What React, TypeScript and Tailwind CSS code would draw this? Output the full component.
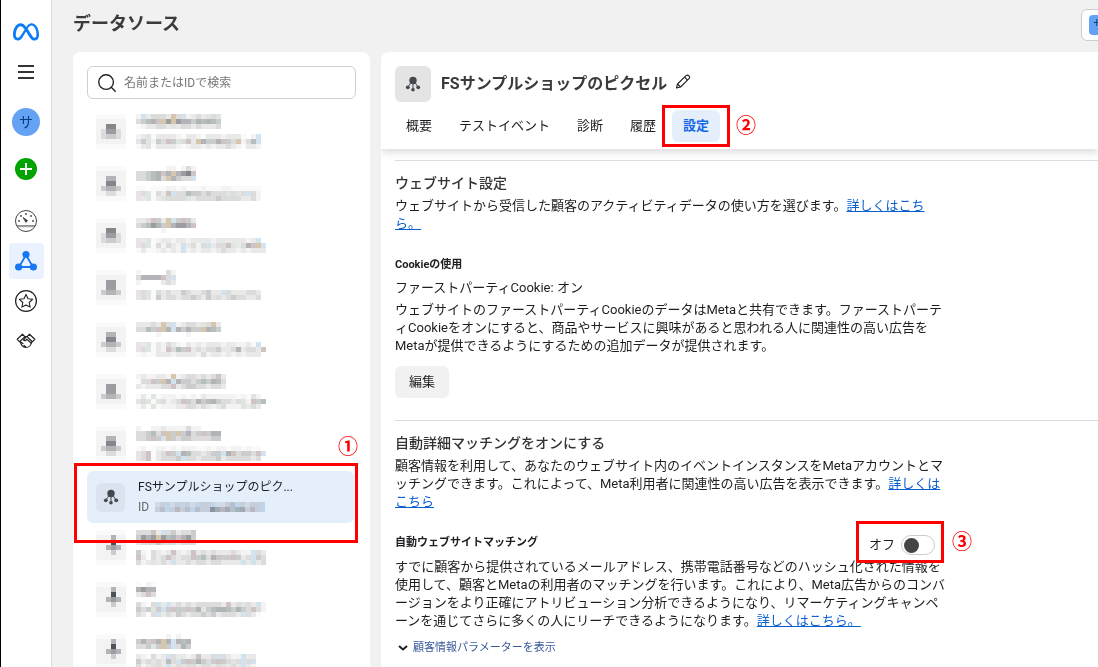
import { useState } from "react";
import type { ReactNode } from "react";
import { FaMeta } from "react-icons/fa6";
import { Search } from "lucide-react";

type Source = {
  name: string[];
  id: string[];
  icon: string[];
};

// one character per mosaic cell
const SHADES: Record<string, string> = {
  "1": "#fafafa",
  "2": "#f3f3f3",
  "3": "#e9e9ea",
  "4": "#dcdcdd",
  "5": "#cbcccd",
  "6": "#b3b4b7",
  "7": "#9b9da1",
  "8": "#84868c",
  "9": "#4d525a",
  o: "#d6c6ac",
  b: "#d3e3ee",
  g: "#b5c0bd",
  p: "#ebe1ea",
  m: "#cfc3c3",
  n: "#dfe6df",
};

const iconA = ["111111", "222222", "228822", "247742", "245542", "222222", "111111"];
const iconB = ["111111", "222222", "226622", "228822", "256652", "224422", "111111"];
const iconC = ["111111", "222222", "227722", "227722", "256652", "222222", "111111"];
const iconD = ["111111", "222622", "222922", "226762", "222522", "222222", "111111"];

const sources: Source[] = [
  { name: ["2b34443o4b2343n4n", "45g6mo7o76656g6g5", "1233443n344343334"], id: ["23n1333321332133323331.2b", "p5n254m5n4m3o6556m54o24gb", "13n1333321233232334321332"], icon: iconA },
  { name: ["......22.242", "445g6m6o678m", "445g64o6544b"], id: ["11.1112212111211122111111", "p4n143mb44g5545444n4n4b42", "p3n13n4444n34444544443342"], icon: iconB },
  { name: ["334m53ob5m53", "45g765o6776m", ".....2......"], id: ["p3n123323323333233333323b", "p4n142432b3424b344mn346mob", "131123232b2323323433232333"], icon: iconA },
  { name: ["2.....42", "46666m4b", "2....343"], id: ["p4n14343354334533b4333443", "p4n153443445435n434544334"], icon: iconC },
  { name: ["33343o4b23443n4o3", "44g5mo6b65655o6g5", "....2.....2......"], id: ["p3n132432132323332332231b", "p4n132m4g5m34344533463443m", "1211333233332423323232333"], icon: iconB },
  { name: ["2322332o23443434m3", "144m5o6b65545g56g4", "3233344m3455443443"], id: ["131n1222121213222222121n2", "p4n1n4234m5465g654434n2m5g", "131n12223344343234222n343"], icon: iconC },
  { name: ["2..2232222422", "445g4mo5o5645m566", "445m5bo5455444455"], id: ["12.1221212221121221221211", "p4m134m5b6g443455b6m4554mb", "p4m134445b443444534444434"], icon: iconB },
  { name: [], id: ["34b34b43b44b3345b4344b", "45b4m45b54476m65g64m4b"], icon: [] },
  { name: ["444m3b453445", "5767o7g6m675", "3444m44b3444"], id: ["5214323m323m34343334322b43", "m31434m4344m5g46m55m534b54", "423n343b3343443443333b3b34"], icon: iconD },
  { name: ["1.21", "6766", "34m4"], id: ["4214b3b34343444443m34n43b2", "545n5b5m55m56n5g66g5654m42", "4314b3435434454534443b431"], icon: iconD },
  { name: ["......2.2..", "565m6o6b6g6", "445n5o5b465"], id: ["321423b43323m334b4322b33", "534n43g4b5m56545m54n4b4b", "423n43b34n4434434n343b32"], icon: iconD },
];

function Mosaic({ rows, className = "" }: { rows: string[]; className?: string }) {
  const cols = Math.max(...rows.map((r) => r.length));
  return (
    <svg
      width={cols * 5}
      height={rows.length * 5}
      shapeRendering="crispEdges"
      className={"block shrink-0 " + className}
      aria-hidden="true"
    >
      {rows.map((row, y) =>
        row.split("").map((c, x) =>
          SHADES[c] ? (
            <rect key={`${x}-${y}`} x={x * 5} y={y * 5} width="5" height="5" fill={SHADES[c]} />
          ) : null
        )
      )}
    </svg>
  );
}

function PixelIcon() {
  return (
    <svg width="16" height="16" viewBox="0 0 16 16" fill="#444950" stroke="#444950" aria-hidden="true">
      <circle cx="8" cy="4.500" r="3.700" stroke="none" />
      <path d="M8 7v6M6 6.500 3 11M10 6.500l3 4.500" strokeWidth="1" fill="none" />
      <circle cx="2.800" cy="11.300" r="1.900" stroke="none" />
      <circle cx="8" cy="13.800" r="1.800" stroke="none" />
      <circle cx="13.200" cy="11.300" r="1.900" stroke="none" />
    </svg>
  );
}

function GaugeIcon() {
  return (
    <svg width="24" height="24" viewBox="0 0 24 24" fill="none" stroke="#444" aria-hidden="true">
      <circle cx="12" cy="12" r="10.500" strokeWidth="1" />
      <path d="M2.500 16.500h19M3.500 17.700h17" strokeWidth=".6" />
      <path d="m9 8.500 4.500 3-1.500 2z" fill="#333" strokeWidth=".8" />
      <g fill="#444" stroke="none">
        <circle cx="5" cy="12" r=".9" />
        <circle cx="7" cy="7" r=".9" />
        <circle cx="12" cy="5" r=".9" />
        <circle cx="17" cy="7" r=".9" />
        <circle cx="19" cy="12" r=".9" />
      </g>
    </svg>
  );
}

function TriangleIcon() {
  return (
    <svg width="24" height="24" viewBox="0 0 24 24" fill="#1877f2" stroke="#1877f2" aria-hidden="true">
      <path d="M12 6 5 18h14z" fill="none" strokeWidth="1.800" />
      <circle cx="12" cy="5.500" r="3.600" stroke="none" />
      <circle cx="4.600" cy="18" r="3.600" stroke="none" />
      <circle cx="19.400" cy="18" r="3.600" stroke="none" />
    </svg>
  );
}

function StarIcon() {
  return (
    <svg width="24" height="24" viewBox="0 0 24 24" fill="none" stroke="#222" strokeLinejoin="round" aria-hidden="true">
      <circle cx="12" cy="12" r="10.400" strokeWidth="1.200" />
      <path d="m12 5.500 2 4.200 4.600.6-3.400 3.200.9 4.600L12 15.900l-4.100 2.200.9-4.600-3.400-3.200 4.600-.6z" strokeWidth="1.100" />
    </svg>
  );
}

function HandshakeIcon() {
  return (
    <svg width="20" height="16" viewBox="0 0 20 16" fill="none" stroke="#222" strokeWidth="1.200" strokeLinejoin="round" strokeLinecap="round" aria-hidden="true">
      <path d="M6.500 1.200 1.200 6.300l2.400 2.500 5.300-5.200z" />
      <path d="m13.500 1.200 5.300 5.100-2.400 2.500-5.300-5.200z" />
      <path d="M8.500 3.500h3M10 4 7.500 7c1.200 1.200 2.500.6 3.500-.8l4.300 4" />
      <path d="M4.500 8.500c0 3 2.300 6 5.200 6 3.300 0 5.600-2.500 5.800-5.500M8 12.500l2 1.800M5.500 9.500l1.500 1" />
    </svg>
  );
}

function PencilIcon() {
  return (
    <svg width="16" height="16" viewBox="0 0 16 16" fill="none" stroke="#222" strokeWidth="1.100" strokeLinejoin="round" aria-hidden="true">
      <path d="m1.500 14 1-4 8.500-8.300c1-.9 2-.8 2.900.1s1 1.900.1 2.800L5.500 13z" />
      <path d="m9.500 3.200 3 3M2.500 10l3 3" />
    </svg>
  );
}

function Step({ children, className }: { children: ReactNode; className: string }) {
  return (
    <span className={"absolute z-10 text-[20px] leading-5 font-bold text-[#f00] " + className}>
      {children}
    </span>
  );
}

function Frame({ className }: { className: string }) {
  return <span className={"pointer-events-none absolute z-10 border-3 border-[#f00] " + className} />;
}

function TextLink({ children }: { children: ReactNode }) {
  return (
    <a href="#" className="text-[#0a5fd0] underline">
      {children}
    </a>
  );
}

function Sidebar() {
  const item = "flex h-9 w-[35px] items-center justify-center rounded";
  return (
    <aside className="flex w-[52px] shrink-0 flex-col items-center border-l border-r border-l-black border-r-[#d8d8d8] bg-white pt-[22px]">
      <a href="#" aria-label="Meta" className="flex h-5 items-center">
        <FaMeta className="text-[26px] text-[#0a7cf5]" />
      </a>
      <button aria-label="メニュー" className="mt-[22px] flex h-4 w-4 flex-col justify-between py-px">
        <span className="h-0.5 w-full bg-[#333]" />
        <span className="h-0.5 w-full bg-[#333]" />
        <span className="h-0.5 w-full bg-[#333]" />
      </button>
      <button className="mt-7 size-7 rounded-full bg-[#64a2f4] text-[14px] leading-7 text-[#0b3d7c]">サ</button>
      <button aria-label="作成" className="mt-[22px] flex size-[22px] items-center justify-center rounded-full bg-[#00a400]">
        <svg width="12" height="12" viewBox="0 0 12 12" stroke="#fff" strokeWidth="2">
          <path d="M6 0v12M0 6h12" />
        </svg>
      </button>
      <nav className="mt-[23px] flex flex-col gap-1">
        <a href="#" aria-label="概要" className={item}>
          <GaugeIcon />
        </a>
        <a href="#" aria-label="データソース" className={item + " bg-[#ebf2ff]"}>
          <TriangleIcon />
        </a>
        <a href="#" aria-label="カスタムコンバージョン" className={item}>
          <StarIcon />
        </a>
        <a href="#" aria-label="パートナー" className={item}>
          <HandshakeIcon />
        </a>
      </nav>
    </aside>
  );
}

function SourceList() {
  return (
    <section className="w-[297px] shrink-0 rounded-t-lg bg-white px-3.5 pt-3.5">
      <label className="flex h-[33px] items-center gap-1.5 rounded-md border border-[#ccd0d5] px-2 text-[#222]">
        <Search size={22} strokeWidth={1.5} />
        <input
          type="text"
          aria-label="検索"
          placeholder="名前またはIDで検索"
          className="min-w-0 flex-1 text-[12px] outline-none placeholder:text-[#777]"
        />
      </label>
      <ul className="mt-2 mr-0.5">
        {sources.map((s, i) =>
          s.name.length === 0 ? (
            <li key={i} className="relative flex h-[52px] items-center gap-[13px] rounded-md bg-[#e5effc] pl-[9px]">
              <span className="flex size-[29px] items-center justify-center rounded-md bg-[#dae3ef]">
                <PixelIcon />
              </span>
              <div className="text-[12px] leading-5">
                <p className="text-[#1c1e21]">FSサンプルショップのピク...</p>
                <div className="flex items-center gap-1.5 text-[#65676b]">
                  ID
                  <Mosaic rows={s.id} className="mix-blend-multiply" />
                </div>
              </div>
              <Frame className="-top-2 -right-1 -bottom-5 -left-[13px]" />
              <Step className="-top-[34px] -right-1">①</Step>
            </li>
          ) : (
            <li key={i} className="flex h-[52px] gap-2.5 pt-[7px] pl-[9px]">
              <Mosaic rows={s.icon} />
              <div className="flex flex-col gap-[5px]">
                <Mosaic rows={s.name} />
                <Mosaic rows={s.id} />
              </div>
            </li>
          )
        )}
      </ul>
    </section>
  );
}

const tabs = ["概要", "テストイベント", "診断", "履歴", "設定"];

function Detail() {
  const [activeTab, setActiveTab] = useState("設定");
  const [matching, setMatching] = useState(false);

  return (
    <section className="min-w-0 flex-1 overflow-hidden rounded-tl-lg bg-white">
      <header className="px-3.5 pt-3.5 pb-[7px] shadow-[0_3px_8px_rgba(0,0,0,0.15)]">
        <div className="flex items-center">
          <span className="flex size-9 items-center justify-center rounded-md bg-[#e4e4e4]">
            <PixelIcon />
          </span>
          <h2 className="ml-2.5 text-[16px] font-bold text-[#3a3b3d]">FSサンプルショップのピクセル</h2>
          <button aria-label="名前を編集" className="ml-2 pb-1">
            <PencilIcon />
          </button>
        </div>
        <div role="tablist" className="mt-2 flex gap-[5px] text-[13px]">
          {tabs.map((t) => (
            <div key={t} className="relative">
              <button
                role="tab"
                aria-selected={t === activeTab}
                onClick={() => setActiveTab(t)}
                className={
                  t === activeTab
                    ? "h-8 rounded-md bg-[#e5effc] px-[11px] font-bold text-[#1468e8]"
                    : "h-8 px-[11px] text-[#1c1e21]"
                }
              >
                {t}
              </button>
              {t === "設定" && (
                <>
                  <Frame className="-inset-x-[10px] -inset-y-[5px]" />
                  <Step className="top-1.5 left-full ml-4">②</Step>
                </>
              )}
            </div>
          ))}
        </div>
      </header>

      <div className="pl-3.5 text-[13px] leading-[18px] whitespace-nowrap text-[#1c1e21]">
        <hr className="mt-[11px] border-[#dadde1]" />
        <h3 className="mt-3 text-[14px] leading-5 font-medium text-[#333]">ウェブサイト設定</h3>
        <p className="mt-1">
          ウェブサイトから受信した顧客のアクティビティデータの使い方を選びます。
          <TextLink>
            詳しくはこち
            <br />
            ら。
          </TextLink>
        </p>
        <h4 className="mt-6 text-[11px] leading-4 font-bold">Cookieの使用</h4>
        <p className="mt-1.5">ファーストパーティCookie: オン</p>
        <p className="mt-1">
          ウェブサイトのファーストパーティCookieのデータはMetaと共有できます。ファーストパーテ
          <br />
          ィCookieをオンにすると、商品やサービスに興味があると思われる人に関連性の高い広告を
          <br />
          Metaが提供できるようにするための追加データが提供されます。
        </p>
        <button className="mt-[11px] h-8 rounded-md bg-[#f1f1f1] px-3.5">編集</button>

        <hr className="mt-[22px] border-[#dadde1]" />
        <h3 className="mt-3 text-[14px] leading-5 font-medium text-[#333]">自動詳細マッチングをオンにする</h3>
        <p className="mt-1">
          顧客情報を利用して、あなたのウェブサイト内のイベントインスタンスをMetaアカウントとマ
          <br />
          ッチングできます。これによって、Meta利用者に関連性の高い広告を表示できます。
          <TextLink>
            詳しくは
            <br />
            こちら
          </TextLink>
        </p>
        <div className="mt-6 flex h-4 max-w-[540px] items-start justify-between">
          <h4 className="text-[11px] leading-4 font-bold">自動ウェブサイトマッチング</h4>
          <div className="relative">
            <label className="flex h-5 items-center gap-1.5">
              {matching ? "オン" : "オフ"}
              <input
                type="checkbox"
                checked={matching}
                onChange={(e) => setMatching(e.target.checked)}
                className="flex h-5 w-[34px] appearance-none items-center rounded-full border border-[#ccc] bg-white px-0.5 before:size-[15px] before:rounded-full before:bg-[#444] checked:justify-end"
              />
            </label>
            <Frame className="-top-[14px] -right-[9px] -bottom-2 -left-[13px]" />
            <Step className="-top-[3px] left-full ml-[17px]">③</Step>
          </div>
        </div>
        <p className="mt-[7px]">
          すでに顧客から提供されているメールアドレス、携帯電話番号などのハッシュ化された情報を
          <br />
          使用して、顧客とMetaの利用者のマッチングを行います。これにより、Meta広告からのコンバ
          <br />
          ージョンをより正確にアトリビューション分析できるようになり、リマーケティングキャンペ
          <br />
          ーンを通じてさらに多くの人にリーチできるようになります。
          <TextLink>詳しくはこちら。</TextLink>
        </p>
        <button className="mt-2.5 flex h-4 items-center gap-[5px] pl-[3px] text-[11px] text-[#385898]">
          <svg width="10" height="6" viewBox="0 0 10 6" fill="none" stroke="#1c1e21" strokeWidth="2">
            <path d="m1 1 4 3.500L9 1" />
          </svg>
          顧客情報パラメーターを表示
        </button>
      </div>
    </section>
  );
}

export default function App() {
  return (
    <div className="flex h-screen overflow-hidden bg-[#f1f1f1] font-['Roboto','Noto_Sans_CJK_JP',sans-serif]">
      <Sidebar />
      <main className="flex min-w-0 flex-1 flex-col pl-[21px]">
        <div className="flex h-[52px] shrink-0 items-start justify-between">
          <h1 className="mt-[11px] text-[18px] leading-[26px] font-bold text-[#3a3b3d]">データソース</h1>
          <button className="mt-[9px] -mr-[23px] flex h-8 w-10 shrink-0 items-center rounded-md border border-[#ccc] bg-white pl-[7px]">
            <span className="size-5 rounded bg-[#64a2f4] text-[12px] leading-5 text-[#0b3d7c]">サ</span>
          </button>
        </div>
        <div className="flex min-h-0 flex-1 gap-[11px]">
          <SourceList />
          <Detail />
        </div>
      </main>
    </div>
  );
}
